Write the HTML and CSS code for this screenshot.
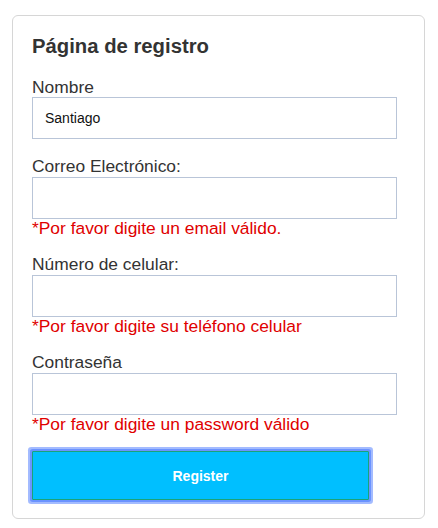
FILE: index.html
```html
<!DOCTYPE html>
<html lang="es">
<head>
<meta charset="utf-8">
<title>Página de registro</title>
<link rel="stylesheet" href="styles.css">
</head>
<body>
<form class="card">
  <h2 class="title">Página de registro</h2>
  <div class="group">
    <label class="label">Nombre</label>
    <input class="input" type="text" value="Santiago">
  </div>
  <div class="group">
    <label class="label">Correo Electrónico:</label>
    <input class="input" type="text">
    <div class="error">*Por favor digite un email válido.</div>
  </div>
  <div class="group">
    <label class="label">Número de celular:</label>
    <input class="input" type="text">
    <div class="error">*Por favor digite su teléfono celular</div>
  </div>
  <div class="group">
    <label class="label">Contraseña</label>
    <input class="input" type="password">
    <div class="error">*Por favor digite un password válido</div>
  </div>
  <button class="btn" type="button">Register</button>
</form>
</body>
</html>
```
FILE: styles.css
```css
html, body {
  margin: 0;
  padding: 0;
  background: #fff;
}
body {
  font-family: "Liberation Sans", Arial, sans-serif;
  color: #333;
}
.card {
  box-sizing: border-box;
  width: 413px;
  margin: 15px 0 0 12px;
  padding: 19px 20px 18px 19px;
  border: 1px solid #d6d6d6;
  border-radius: 6px;
  display: flex;
  flex-direction: column;
  align-items: flex-start;
}
.title {
  margin: 0 0 19.5px;
  font-size: 20.3px;
  line-height: 23px;
  font-weight: bold;
  color: #333;
}
.group {
  display: flex;
  flex-direction: column;
  align-items: flex-start;
  margin-bottom: 17px;
}
.group:first-of-type {
  margin-bottom: 18px;
}
.label {
  font-size: 17.4px;
  line-height: 19.5px;
  color: #333;
}
.input {
  box-sizing: border-box;
  width: 365px;
  height: 42px;
  margin: 0;
  padding: 0 12px;
  border: 1px solid #b9c5d8;
  border-radius: 0;
  font-family: "Liberation Sans", Arial, sans-serif;
  font-size: 14px;
  color: #111;
  background: #fff;
  outline: none;
}
.error {
  font-size: 17.4px;
  line-height: 19.5px;
  color: #e00000;
}
.btn {
  box-sizing: border-box;
  width: 337px;
  height: 49px;
  margin: 0;
  border: 1px solid #1aa37a;
  border-radius: 1px;
  background: #00bfff;
  color: #fff;
  font-family: "Liberation Sans", Arial, sans-serif;
  font-size: 14px;
  font-weight: bold;
  box-shadow: 0 0 0 2px #6b93ff, 0 0 0 4px #a3bbff;
  cursor: pointer;
}
```
